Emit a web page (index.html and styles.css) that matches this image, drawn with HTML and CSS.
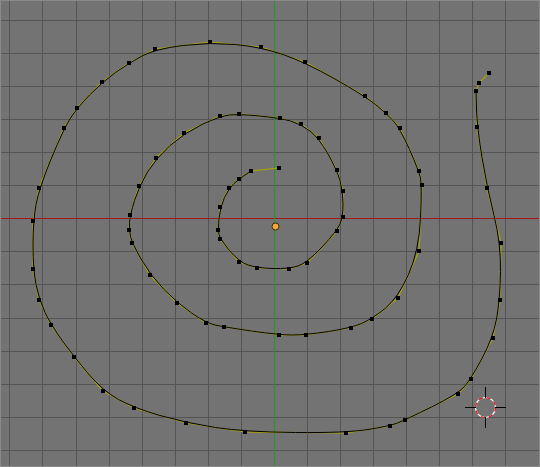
FILE: index.html
```html
<!DOCTYPE html>
<html>
<head>
<meta charset="utf-8">
<title>3D View - Curve Edit</title>
<link rel="stylesheet" href="styles.css">
</head>
<body>
<div class="viewport">
<svg class="view" width="540" height="467" viewBox="0 0 540 467" xmlns="http://www.w3.org/2000/svg">
  <defs>
    <marker id="vert" class="vert" markerWidth="4" markerHeight="4" refX="2" refY="2" markerUnits="userSpaceOnUse">
      <rect width="4" height="4"/>
    </marker>
  </defs>
  <rect class="bg" x="0" y="0" width="540" height="467"/>
  <g class="grid">
    <rect x="9" y="0" width="1" height="467"/>
    <rect x="42" y="0" width="1" height="467"/>
    <rect x="76" y="0" width="1" height="467"/>
    <rect x="109" y="0" width="1" height="467"/>
    <rect x="142" y="0" width="1" height="467"/>
    <rect x="175" y="0" width="1" height="467"/>
    <rect x="208" y="0" width="1" height="467"/>
    <rect x="241" y="0" width="1" height="467"/>
    <rect x="307" y="0" width="1" height="467"/>
    <rect x="340" y="0" width="1" height="467"/>
    <rect x="373" y="0" width="1" height="467"/>
    <rect x="406" y="0" width="1" height="467"/>
    <rect x="439" y="0" width="1" height="467"/>
    <rect x="472" y="0" width="1" height="467"/>
    <rect x="505" y="0" width="1" height="467"/>
    <rect x="0" y="20" width="540" height="1"/>
    <rect x="0" y="53" width="540" height="1"/>
    <rect x="0" y="86" width="540" height="1"/>
    <rect x="0" y="119" width="540" height="1"/>
    <rect x="0" y="152" width="540" height="1"/>
    <rect x="0" y="185" width="540" height="1"/>
    <rect x="0" y="251" width="540" height="1"/>
    <rect x="0" y="284" width="540" height="1"/>
    <rect x="0" y="318" width="540" height="1"/>
    <rect x="0" y="351" width="540" height="1"/>
    <rect x="0" y="384" width="540" height="1"/>
    <rect x="0" y="417" width="540" height="1"/>
    <rect x="0" y="450" width="540" height="1"/>
  </g>
  <rect class="axis-x" x="0" y="218" width="540" height="1"/>
  <rect class="axis-y" x="274" y="0" width="1" height="467"/>

  <polyline class="cage" points="279,168 251,171 239,179 229,188 220,207 218,230 220,239 239,262 257,268 289,269 307,263 337,231 343,217 343,191 337,170 319,138 301,124 280,118 239,114 220,116 184,133 156,158 139,186 130,215 129,230 132,243 150,275 177,303 206,323 224,327 279,335 306,335 351,328 372,319 398,298 419,251 422,185 419,171 400,128 386,113 365,96 305,62 261,47 210,42 155,49 129,63 102,82 77,108 64,128 39,188 33,221 33,269 39,300 51,325 74,357 103,391 134,408 186,423 245,432 346,433 390,426 405,420 458,394 471,379 493,338 500,300 501,243 487,188 477,127 476,91 479,83 489,73"/>

  <path class="curve" d="M 251 171 L 245 175 Q 239 179 234 183.5 Q 229 188 224.5 197.5 Q 220 207 219 218.5 Q 218 230 219 234.5 Q 220 239 229.5 250.5 Q 239 262 248 265 Q 257 268 273 268.5 Q 289 269 298 266 Q 307 263 322 247 Q 337 231 340 224 Q 343 217 343 204 Q 343 191 340 180.5 Q 337 170 328 154 Q 319 138 310 131 Q 301 124 290.5 121 Q 280 118 259.5 116 Q 239 114 229.5 115 Q 220 116 202 124.5 Q 184 133 170 145.5 Q 156 158 147.5 172 Q 139 186 134.5 200.5 Q 130 215 129.5 222.5 Q 129 230 130.5 236.5 Q 132 243 141 259 Q 150 275 163.5 289 Q 177 303 191.5 313 Q 206 323 215 325 Q 224 327 251.5 331 Q 279 335 292.5 335 Q 306 335 328.5 331.5 Q 351 328 361.5 323.5 Q 372 319 385 308.5 Q 398 298 408.5 274.5 Q 419 251 420.5 218 Q 422 185 420.5 178 Q 419 171 409.5 149.5 Q 400 128 393 120.5 Q 386 113 375.5 104.5 Q 365 96 335 79 Q 305 62 283 54.5 Q 261 47 235.5 44.5 Q 210 42 182.5 45.5 Q 155 49 142 56 Q 129 63 115.5 72.5 Q 102 82 89.5 95 Q 77 108 70.5 118 Q 64 128 51.5 158 Q 39 188 36 204.5 Q 33 221 33 245 Q 33 269 36 284.5 Q 39 300 45 312.5 Q 51 325 62.5 341 Q 74 357 88.5 374 Q 103 391 118.5 399.5 Q 134 408 160 415.5 Q 186 423 215.5 427.5 Q 245 432 295.5 432.5 Q 346 433 368 429.5 Q 390 426 397.5 423 Q 405 420 431.5 407 Q 458 394 464.5 386.5 Q 471 379 482 358.5 Q 493 338 496.5 319 Q 500 300 500.5 271.5 Q 501 243 494 215.5 Q 487 188 482 157.5 Q 477 127 476.5 109 L 476 91"/>

  <polyline class="verts" points="279,168 251,171 239,179 229,188 220,207 218,230 220,239 239,262 257,268 289,269 307,263 337,231 343,217 343,191 337,170 319,138 301,124 280,118 239,114 220,116 184,133 156,158 139,186 130,215 129,230 132,243 150,275 177,303 206,323 224,327 279,335 306,335 351,328 372,319 398,298 419,251 422,185 419,171 400,128 386,113 365,96 305,62 261,47 210,42 155,49 129,63 102,82 77,108 64,128 39,188 33,221 33,269 39,300 51,325 74,357 103,391 134,408 186,423 245,432 346,433 390,426 405,420 458,394 471,379 493,338 500,300 501,243 487,188 477,127 476,91 479,83 489,73"/>

  <circle class="origin" cx="275.5" cy="226.5" r="3.5"/>

  <g class="cursor">
    <circle class="cursor-ring" cx="485.5" cy="407.5" r="10"/>
    <circle class="cursor-dash" cx="485.5" cy="407.5" r="10"/>
    <path class="cursor-cross" d="M 465 407.5 H 476 M 495 407.5 H 506 M 485.5 387 V 398 M 485.5 417 V 428"/>
  </g>
  <rect class="frame" x="0.5" y="0.5" width="539" height="466"/>
</svg>
</div>
</body>
</html>
```
FILE: styles.css
```css
html, body {
  margin: 0;
  padding: 0;
  background: #737373;
  overflow: hidden;
}
.viewport {
  width: 540px;
  height: 467px;
}
.view {
  display: block;
}
.bg {
  fill: #737373;
}
.grid rect {
  fill: #545454;
  shape-rendering: crispEdges;
}
.axis-x {
  fill: #a01818;
  shape-rendering: crispEdges;
}
.axis-y {
  fill: #18a018;
  shape-rendering: crispEdges;
}
.cage {
  fill: none;
  stroke: #a8a400;
  stroke-width: 1.2;
  stroke-linejoin: round;
}
.curve {
  fill: none;
  stroke: #000;
  stroke-width: 1;
}
.verts {
  fill: none;
  stroke: none;
  marker-start: url(#vert);
  marker-mid: url(#vert);
  marker-end: url(#vert);
}
.vert rect {
  fill: #000;
  shape-rendering: crispEdges;
}
.origin {
  fill: #f0a838;
  stroke: #3a2a10;
  stroke-width: 1;
}
.cursor-ring {
  fill: none;
  stroke: #ffffff;
  stroke-width: 1.2;
}
.cursor-dash {
  fill: none;
  stroke: #e01010;
  stroke-width: 1.2;
  stroke-dasharray: 4 4;
}
.cursor-cross {
  fill: none;
  stroke: #000;
  stroke-width: 1;
  shape-rendering: crispEdges;
}
.frame {
  fill: none;
  stroke: #8a8a8a;
  stroke-width: 1;
  shape-rendering: crispEdges;
}
```
